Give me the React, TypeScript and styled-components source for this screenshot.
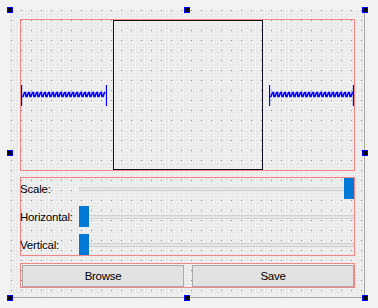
import React from "react";
import styled, { createGlobalStyle } from "styled-components";

const GlobalStyle = createGlobalStyle`
  html, body {
    margin: 0;
    padding: 0;
    background: #f2f2f2;
  }
  body {
    font-family: "Liberation Sans", Arial, sans-serif;
  }
`;

const Page = styled.div`
  position: relative;
  width: 378px;
  height: 308px;
  box-sizing: border-box;
  padding: 10px 0 0 10px;
  background: #f2f2f2;
  overflow: hidden;
`;

const Form = styled.div`
  width: 355px;
  height: 288px;
  box-sizing: border-box;
  padding: 9px 9px 0 10px;
  border-right: 1px solid #a6a6a6;
  border-bottom: 1px solid #a6a6a6;
  display: flex;
  flex-direction: column;
  background-color: #f2f2f2;
  background-image:
    radial-gradient(circle at 1.5px 0.5px, #8a8a8a 0.75px, transparent 0.9px),
    radial-gradient(circle at 1px 1px, #e4e4e4 0.6px, transparent 0.9px),
    radial-gradient(circle at 2px 2px, #e8e8e8 0.6px, transparent 0.9px);
  background-size: 10px 10px, 3px 3px, 5px 4px;
`;

const LayoutBox = styled.div<{ $mt?: number }>`
  border: 1px solid #f48585;
  margin-top: ${(p) => p.$mt ?? 0}px;
`;

const SplitRow = styled(LayoutBox)`
  height: 150px;
  display: flex;
  align-items: center;
  gap: 6px;
`;

const PreviewFrame = styled.div`
  width: 150px;
  height: 150px;
  box-sizing: border-box;
  border: 1px solid #0c0c1c;
  flex: none;
`;

const SpacerWrap = styled.div<{ $w: number }>`
  width: ${(p) => p.$w}px;
  height: 21px;
  flex: none;
  display: flex;
`;

const ControlsGrid = styled(LayoutBox)`
  height: 77px;
  display: grid;
  grid-template-columns: 58px 1fr;
  grid-auto-rows: 21px;
  row-gap: 7px;
`;

const Label = styled.div`
  font-size: 11.5px;
  color: #000;
  display: flex;
  align-items: center;
  margin-left: -1px;
  letter-spacing: -0.2px;
`;

const SliderTrack = styled.div`
  position: relative;
  display: flex;
  align-items: center;
`;

const Groove = styled.div`
  flex: 1;
  height: 4px;
  box-sizing: border-box;
  border: 1px solid #d2d2d2;
  background: #e6e6e6;
`;

const SliderHandle = styled.div`
  position: absolute;
  top: 0;
  width: 10px;
  height: 21px;
  background: #0078d7;
`;

const ButtonRow = styled(LayoutBox)`
  height: 23px;
  box-sizing: content-box;
  display: flex;
  gap: 8px;
  padding: 0 0 0 1px;
  align-items: center;
`;

const PushButton = styled.button`
  flex: 1;
  height: 22px;
  margin-top: 1px;
  box-sizing: border-box;
  border: 1px solid #a9a9a9;
  background: #e2e2e2;
  font-family: "Liberation Sans", Arial, sans-serif;
  font-size: 11.5px;
  letter-spacing: -0.3px;
  color: #000;
  padding: 0;
`;

const Grip = styled.div<{ $x: number; $y: number }>`
  position: absolute;
  left: ${(p) => p.$x}px;
  top: ${(p) => p.$y}px;
  width: 6px;
  height: 6px;
  box-sizing: border-box;
  border: 1px solid #0000ff;
  background: #000;
`;

function Spring({ width }: { width: number }) {
  const pts: string[] = [];
  for (let x = 1; x < width - 2; x += 4) {
    pts.push(`${x},11.5`, `${x + 1},11.5`, `${x + 2.5},7.5`, `${x + 3.5},7.5`);
  }
  return (
    <SpacerWrap $w={width}>
      <svg width={width} height={21} viewBox={`0 0 ${width} 21`}>
        <line x1={0.5} y1={0} x2={0.5} y2={21} stroke="#0000ff" strokeWidth={1.3} />
        <line x1={width - 0.5} y1={0} x2={width - 0.5} y2={21} stroke="#0000ff" strokeWidth={1.3} />
        <polyline points={pts.join(" ")} fill="none" stroke="#0000ff" strokeWidth={1.6} />
      </svg>
    </SpacerWrap>
  );
}

function Slider({ value }: { value: number }) {
  return (
    <SliderTrack>
      <Groove />
      <SliderHandle style={{ left: `calc(${value * 100}% - ${value * 10}px)` }} />
    </SliderTrack>
  );
}

const grips = [
  [7, 7],
  [184, 7],
  [362, 7],
  [7, 150],
  [362, 150],
  [7, 295],
  [184, 295],
  [362, 295],
];

export default function App() {
  return (
    <>
      <GlobalStyle />
      <Page>
        <Form>
          <SplitRow>
            <Spring width={86} />
            <PreviewFrame />
            <Spring width={85} />
          </SplitRow>
          <ControlsGrid $mt={6}>
            <Label>Scale:</Label>
            <Slider value={1} />
            <Label>Horizontal:</Label>
            <Slider value={0} />
            <Label>Vertical:</Label>
            <Slider value={0} />
          </ControlsGrid>
          <ButtonRow $mt={7}>
            <PushButton>Browse</PushButton>
            <PushButton>Save</PushButton>
          </ButtonRow>
        </Form>
        {grips.map(([x, y]) => (
          <Grip key={`${x}-${y}`} $x={x} $y={y} />
        ))}
      </Page>
    </>
  );
}
